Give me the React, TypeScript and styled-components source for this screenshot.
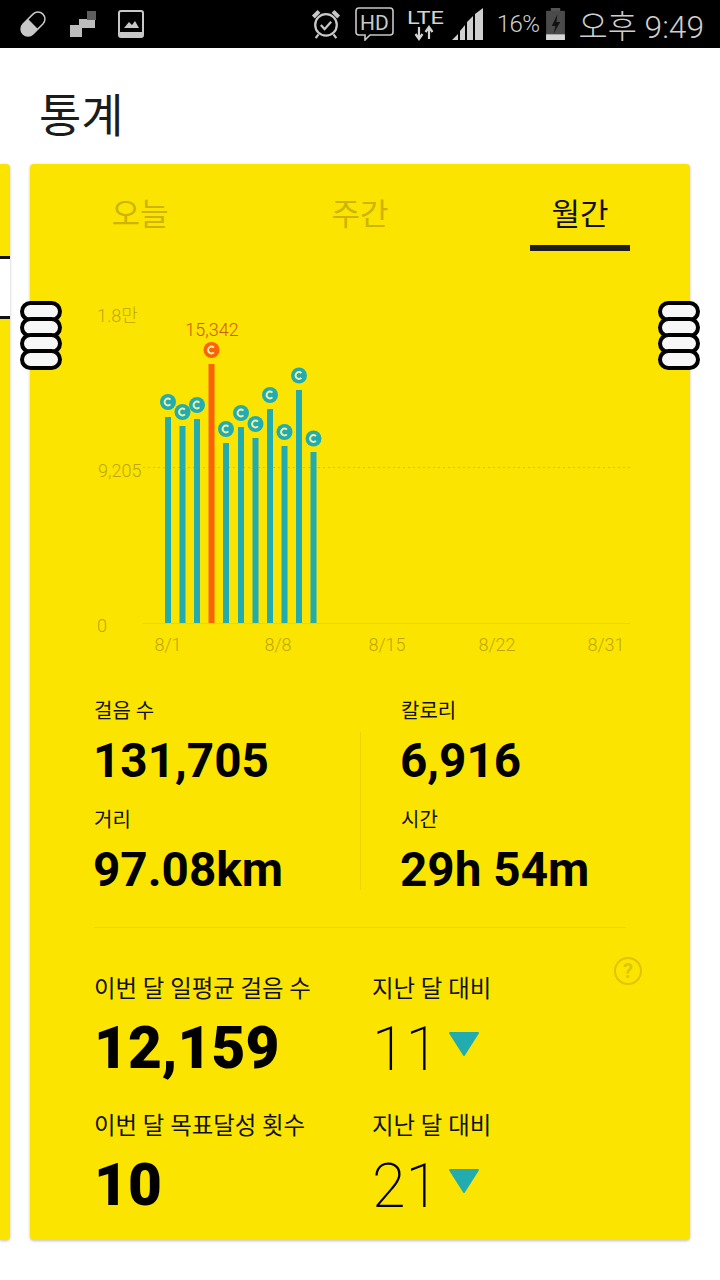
import React from "react";
import styled, { createGlobalStyle } from "styled-components";

const GlobalStyle = createGlobalStyle`
  html, body {
    margin: 0;
    padding: 0;
    background: #fff;
    font-family: Roboto, "Noto Sans CJK KR", sans-serif;
  }
`;

const YELLOW = "#fbe500";
const TEAL = "#22acb0";
const ORANGE = "#fb6207";
const MUTED = "#bfa50e";
const TAB_MUTED = "#cfb308";

const Page = styled.div`
  position: relative;
  width: 720px;
  height: 1280px;
  overflow: hidden;
  background: #fff;
`;

const StatusBar = styled.div`
  display: flex;
  align-items: center;
  height: 48px;
  padding: 0 16px 0 18px;
  background: #000;
  color: #cfcfcf;
`;

const StatusLeft = styled.div`
  display: flex;
  align-items: center;
  gap: 22px;
  flex: 1;
`;

const StatusRight = styled.div`
  display: flex;
  align-items: center;
`;

const StatusItem = styled.div<{ $gap?: number }>`
  display: flex;
  margin-left: ${(p) => p.$gap ?? 0}px;
`;

const Percent = styled.span`
  font-size: 24px;
  font-weight: 300;
  letter-spacing: -0.5px;
`;

const Clock = styled.span`
  font-size: 31.7px;
  font-weight: 300;
  white-space: nowrap;
`;

const Title = styled.h1`
  margin: 0;
  height: 116px;
  padding: 38px 0 0 39px;
  box-sizing: border-box;
  font-size: 46px;
  line-height: 60px;
  font-weight: 400;
  color: #1c1c1c;
`;

const Carousel = styled.div`
  display: flex;
  gap: 20px;
  height: 1076px;
`;

const PrevCard = styled.div`
  display: flex;
  flex-direction: column;
  width: 10px;
  border-radius: 0 4px 4px 0;
  background: ${YELLOW};
  box-shadow: 0 1px 3px rgba(0, 0, 0, 0.25);
`;

const PrevCardWindow = styled.div`
  height: 63px;
  margin-top: 92px;
  box-sizing: border-box;
  background: #fff;
  border-top: 3px solid #111;
  border-bottom: 3px solid #111;
`;

const Card = styled.section`
  width: 660px;
  border-radius: 4px;
  background: ${YELLOW};
  box-shadow: 0 1px 3px rgba(0, 0, 0, 0.25);
`;

const Tabs = styled.div`
  display: grid;
  grid-template-columns: repeat(3, 220px);
  height: 87px;
`;

const Tab = styled.div<{ $active?: boolean }>`
  display: flex;
  flex-direction: column;
  align-items: center;
  padding-top: 30px;
  box-sizing: border-box;
  font-size: 31px;
  line-height: 42px;
  color: ${(p) => (p.$active ? "#111" : TAB_MUTED)};

  &::after {
    content: "";
    display: ${(p) => (p.$active ? "block" : "none")};
    width: 100px;
    height: 6px;
    margin-top: 9px;
    background: #1e1e1e;
  }
`;

const ChartSvg = styled.svg`
  display: block;
  width: 660px;
  height: 370px;
  margin-top: 39px;
`;

const StatGrid = styled.div`
  display: grid;
  grid-template-columns: 266px 41px 1fr;
  grid-template-rows: 109px 109px;
  margin: 37px 64px 0;
`;

const Divider = styled.div`
  grid-column: 2;
  grid-row: 1 / span 2;
  width: 1px;
  margin: 35px 0 25px;
  background: #efd404;
`;

const Stat = styled.div<{ $col: number; $row: number }>`
  grid-column: ${(p) => p.$col};
  grid-row: ${(p) => p.$row};
`;

const StatLabel = styled.div`
  margin-top: 1px;
  font-size: 20px;
  line-height: 26px;
  color: #111;
`;

const StatValue = styled.div`
  margin-top: 7px;
  margin-left: -1px;
  font-size: 47.7px;
  line-height: 60px;
  font-weight: 700;
  color: #000;
`;

const Rule = styled.div`
  height: 1px;
  margin: 12px 64px 0;
  background: #efd404;
`;

const Summary = styled.div`
  position: relative;
  display: grid;
  grid-template-columns: 278px 1fr;
  grid-template-rows: 137px 137px;
  margin: 45px 64px 0;
`;

const HelpIcon = styled.svg`
  position: absolute;
  top: -17px;
  right: -17px;
`;

const SummaryLabel = styled.div`
  font-size: 23.4px;
  line-height: 32px;
  color: #111;
`;

const SummaryValue = styled.div`
  margin-top: 5px;
  font-size: 58.5px;
  line-height: 76px;
  font-weight: 900;
  color: #000;
`;

const CompareRow = styled.div`
  display: flex;
  align-items: flex-start;
  gap: 9px;
  margin-top: 6px;
`;

const CompareValue = styled.div`
  font-size: 61px;
  line-height: 76px;
  font-weight: 200;
  color: #000;
`;

const DownArrow = styled.svg`
  margin-top: 20px;
`;

const Handle = styled.div<{ $side: "left" | "right" }>`
  position: absolute;
  top: 301px;
  left: ${(p) => (p.$side === "left" ? 20 : 658)}px;
  display: flex;
  flex-direction: column;
  width: 42px;
`;

const HandleLink = styled.div`
  height: 21px;
  margin-bottom: -5px;
  box-sizing: border-box;
  border: 4px solid #000;
  border-radius: 11px;
  background: #f7f7f7;

  &:last-child {
    margin-bottom: 0;
  }
`;

const bars = [
  { x: 168, top: 417, cy: 402 },
  { x: 182.5, top: 426, cy: 412 },
  { x: 197, top: 419, cy: 405 },
  { x: 211.5, top: 364, cy: 350, best: true },
  { x: 226, top: 443, cy: 429 },
  { x: 241, top: 427, cy: 413 },
  { x: 255.5, top: 438, cy: 424 },
  { x: 270, top: 409, cy: 395 },
  { x: 284.5, top: 446, cy: 432 },
  { x: 299, top: 390, cy: 375.5 },
  { x: 313.5, top: 452, cy: 438.5 },
];

const xLabels = [
  { x: 168, text: "8/1" },
  { x: 278, text: "8/8" },
  { x: 387, text: "8/15" },
  { x: 497, text: "8/22" },
  { x: 606, text: "8/31" },
];

const stats = [
  { col: 1, row: 1, label: "걸음 수", value: "131,705" },
  { col: 3, row: 1, label: "칼로리", value: "6,916" },
  { col: 1, row: 2, label: "거리", value: "97.08km" },
  { col: 3, row: 2, label: "시간", value: "29h 54m" },
];

const Chart = () => (
  <ChartSvg viewBox="30 290 660 370">
    <line x1="143" y1="623.5" x2="630" y2="623.5" stroke="#efd404" />
    <line x1="143" y1="467.5" x2="630" y2="467.5" stroke="#dcbc0c" strokeDasharray="2 3" />
    <g fontSize="18" fontWeight="300" fill={MUTED} fontFamily='Roboto, "Noto Sans CJK KR", sans-serif'>
      <text x="97" y="322">1.8만</text>
      <text x="98" y="477">9,205</text>
      <text x="97" y="632">0</text>
      {xLabels.map((l) => (
        <text key={l.text} x={l.x} y="651" textAnchor="middle">
          {l.text}
        </text>
      ))}
    </g>
    <text x="212" y="336" fontSize="18" fontWeight="300" textAnchor="middle" fill="#d0580a" fontFamily="Roboto, sans-serif">
      15,342
    </text>
    {bars.map((b) => {
      const color = b.best ? ORANGE : TEAL;
      return (
        <g key={b.x}>
          <rect x={b.x - 3} y={b.top} width="6" height={623 - b.top} fill={color} />
          <circle cx={b.x} cy={b.cy} r="8" fill={color} />
          <path
            d={`M${b.x + 2.4} ${b.cy - 2.4}A3.4 3.4 0 1 0 ${b.x + 2.4} ${b.cy + 2.4}`}
            fill="none"
            stroke="#eef0a8"
            strokeWidth="2"
          />
        </g>
      );
    })}
  </ChartSvg>
);

const StatusIcons = () => (
  <StatusLeft>
    <svg width="30" height="30" viewBox="0 0 30 30">
      <g transform="rotate(-45 15 15)">
        <rect x="1" y="8" width="28" height="14" rx="7" fill="none" stroke="#c8c8c8" strokeWidth="1.5" />
        <path d="M8 8h7v14H8a7 7 0 0 1 0-14z" fill="#c8c8c8" />
      </g>
    </svg>
    <svg width="26" height="26" viewBox="0 0 26 26">
      <rect x="0" y="14" width="12" height="12" fill="#bdbdbd" />
      <rect x="9" y="8" width="16" height="9" fill="#bdbdbd" />
      <rect x="17" y="0" width="9" height="9" fill="#5e5e5e" />
    </svg>
    <svg width="26" height="28" viewBox="0 0 26 28">
      <rect x="1" y="1" width="24" height="26" rx="2" fill="none" stroke="#c8c8c8" strokeWidth="2" />
      <rect x="1" y="22" width="24" height="5" fill="#c8c8c8" />
      <path d="M6 18l5-6 3 3 3-4 4 7z" fill="#c8c8c8" />
    </svg>
  </StatusLeft>
);

const StatusRightIcons = () => (
  <StatusRight>
    <StatusItem>
      <svg width="30" height="32" viewBox="0 0 32 34">
        <circle cx="16" cy="18" r="11.5" fill="none" stroke="#c8c8c8" strokeWidth="2.4" />
        <path d="M10.5 18l4 4.5 7-8" fill="none" stroke="#c8c8c8" strokeWidth="2.4" />
        <path d="M1 8l6-6 3 3-6 6zM31 8l-6-6-3 3 6 6z" fill="#c8c8c8" />
        <path d="M8 28l-3 4M24 28l3 4" stroke="#c8c8c8" strokeWidth="2.4" />
      </svg>
    </StatusItem>
    <StatusItem $gap={14}>
      <svg width="39" height="34" viewBox="0 0 39 34">
        <path d="M4 1h31a3 3 0 0 1 3 3v21a3 3 0 0 1-3 3H15l-5 5v-5H4a3 3 0 0 1-3-3V4a3 3 0 0 1 3-3z" fill="none" stroke="#c8c8c8" strokeWidth="1.6" />
        <text x="19.5" y="23" fontSize="21" textAnchor="middle" fill="#c8c8c8" fontFamily="Roboto, sans-serif">HD</text>
      </svg>
    </StatusItem>
    <StatusItem $gap={12}>
      <svg width="39" height="34" viewBox="0 0 39 34">
        <text x="1" y="17" fontSize="19" textLength="37" lengthAdjust="spacingAndGlyphs" fill="#d4d4d4" fontFamily="Roboto, sans-serif">LTE</text>
        <path d="M13 20v12M9.500 27l3.500 5 3.500-5" fill="none" stroke="#d4d4d4" strokeWidth="2.200" />
        <path d="M23 32V20M19.500 25l3.500-5 3.500 5" fill="none" stroke="#d4d4d4" strokeWidth="2.200" />
      </svg>
    </StatusItem>
    <StatusItem $gap={7}>
      <svg width="32" height="32" viewBox="0 0 32 32">
        <path d="M0 32l6-6v6zM8 32V23l5-6v15zM15 32V14l6-6v24zM23 32V6l8-6v32z" fill="#cfcfcf" />
      </svg>
    </StatusItem>
    <StatusItem $gap={13}>
      <Percent>16%</Percent>
    </StatusItem>
    <StatusItem $gap={5}>
      <svg width="21" height="32" viewBox="0 0 22 34">
        <rect x="6" y="0" width="10" height="4" fill="#555" />
        <rect x="1" y="3" width="20" height="31" fill="#4a4a4a" />
        <rect x="1" y="28" width="20" height="6" fill="#d8d8d8" />
        <path d="M13 7l-6 12h4l-2 8 7-12h-4z" fill="#111" />
      </svg>
    </StatusItem>
    <StatusItem $gap={13}>
      <Clock>오후 9:49</Clock>
    </StatusItem>
  </StatusRight>
);

const CompareArrow = () => (
  <DownArrow width="32" height="26" viewBox="0 0 32 26">
    <path d="M2 2h28L16 24z" fill={TEAL} stroke={TEAL} strokeWidth="2" strokeLinejoin="round" />
  </DownArrow>
);

const App: React.FC = () => (
  <Page>
    <GlobalStyle />
    <StatusBar>
      <StatusIcons />
      <StatusRightIcons />
    </StatusBar>
    <Title>통계</Title>
    <Carousel>
      <PrevCard>
        <PrevCardWindow />
      </PrevCard>
      <Card>
        <Tabs>
          <Tab>오늘</Tab>
          <Tab>주간</Tab>
          <Tab $active>월간</Tab>
        </Tabs>
        <Chart />
        <StatGrid>
          <Divider />
          {stats.map((s) => (
            <Stat key={s.label} $col={s.col} $row={s.row}>
              <StatLabel>{s.label}</StatLabel>
              <StatValue>{s.value}</StatValue>
            </Stat>
          ))}
        </StatGrid>
        <Rule />
        <Summary>
          <HelpIcon width="30" height="30" viewBox="0 0 30 30">
            <circle cx="15" cy="15" r="13" fill="none" stroke="#e0c40a" strokeWidth="2" />
            <text x="15" y="22" fontSize="20" fontWeight="700" textAnchor="middle" fill="#e0c40a" fontFamily="Roboto, sans-serif">?</text>
          </HelpIcon>
          <div>
            <SummaryLabel>이번 달 일평균 걸음 수</SummaryLabel>
            <SummaryValue>12,159</SummaryValue>
          </div>
          <div>
            <SummaryLabel>지난 달 대비</SummaryLabel>
            <CompareRow>
              <CompareValue>11</CompareValue>
              <CompareArrow />
            </CompareRow>
          </div>
          <div>
            <SummaryLabel>이번 달 목표달성 횟수</SummaryLabel>
            <SummaryValue>10</SummaryValue>
          </div>
          <div>
            <SummaryLabel>지난 달 대비</SummaryLabel>
            <CompareRow>
              <CompareValue>21</CompareValue>
              <CompareArrow />
            </CompareRow>
          </div>
        </Summary>
      </Card>
    </Carousel>
    <Handle $side="left">
      <HandleLink />
      <HandleLink />
      <HandleLink />
      <HandleLink />
    </Handle>
    <Handle $side="right">
      <HandleLink />
      <HandleLink />
      <HandleLink />
      <HandleLink />
    </Handle>
  </Page>
);

export default App;
